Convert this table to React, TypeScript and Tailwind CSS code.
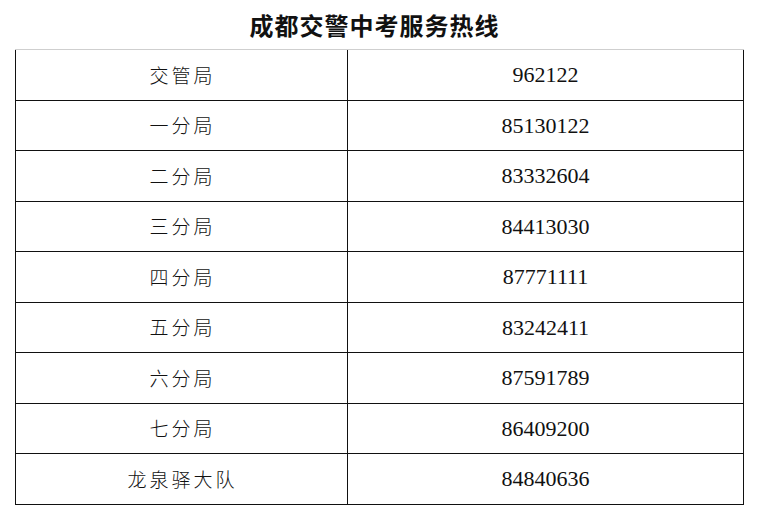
const rows: [string, string][] = [
  ["交管局", "962122"],
  ["一分局", "85130122"],
  ["二分局", "83332604"],
  ["三分局", "84413030"],
  ["四分局", "87771111"],
  ["五分局", "83242411"],
  ["六分局", "87591789"],
  ["七分局", "86409200"],
  ["龙泉驿大队", "84840636"],
];

export default function App() {
  return (
    <div className="w-[760px] h-[513px] bg-white text-[#111]">
      {/* 标题 */}
      <div className="h-[49px] flex items-center justify-center pr-[11px] pt-[1px]">
        <h1 className="text-[24px] leading-none font-semibold tracking-[1px] font-['Noto_Sans_CJK_SC',serif]">
          成都交警中考服务热线
        </h1>
      </div>

      <div className="ml-[15px] w-[729px] border-t border-[#cfcfcf]">
        {rows.map(([name, phone]) => (
          <div
            key={name}
            className="grid grid-cols-[332px_1fr] h-[50.5px] border-x-[1.5px] border-b-[1.5px] border-[#111]"
          >
            <div className="flex items-center justify-center pl-[2px] border-r-[1.5px] border-[#111] text-[19px] font-light tracking-[3px] font-['Noto_Sans_CJK_SC',sans-serif]">
              {name}
            </div>
            <div className="flex items-center justify-center text-[22px] font-['Liberation_Serif',serif]">
              {phone}
            </div>
          </div>
        ))}
      </div>
    </div>
  );
}
